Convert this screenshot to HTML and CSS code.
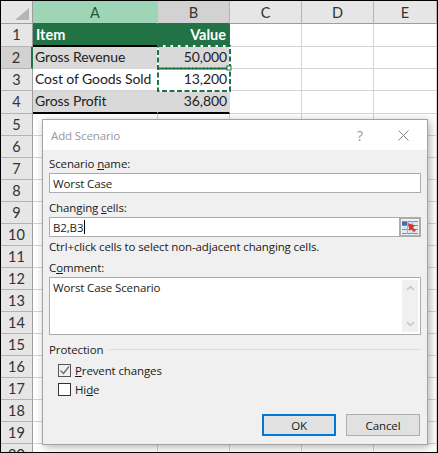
FILE: index.html
```html
<!DOCTYPE html>
<html lang="en">
<head>
<meta charset="utf-8">
<title>Add Scenario</title>
<link rel="stylesheet" href="styles.css">
</head>
<body>
<div class="frame">
  <div class="sheet">
    <div class="row row-head">
      <div class="rh corner"><svg width="14" height="12" viewBox="0 0 14 12"><path d="M14 0V12H0Z" fill="#b5b5b5"/></svg></div>
      <div class="ch col-a sel-a">A</div><div class="ch col-v sel-b">B</div><div class="ch col-n">C</div><div class="ch col-n">D</div><div class="ch col-l">E</div>
    </div>
    <div class="row r-tall">
      <div class="rh">1</div>
      <div class="c col-a th">Item</div><div class="c col-v th num">Value</div><div class="c col-n"></div><div class="c col-n"></div><div class="c col-l"></div>
    </div>
    <div class="row">
      <div class="rh rh-sel">2</div>
      <div class="c col-a band">Gross Revenue</div>
      <div class="c col-v band num anchor">50,000
        <svg class="ants" width="76" height="50" viewBox="0 0 76 50">
          <rect x="1" y="1" width="72" height="22.5" class="ant-bg"/>
          <rect x="1" y="23.5" width="72" height="22.5" class="ant-bg"/>
          <rect x="1" y="1" width="72" height="22.5" class="ant-fg"/>
          <rect x="1" y="23.5" width="72" height="22.5" class="ant-fg"/>
          <rect x="70" y="21" width="4" height="4" class="ant-handle"/>
        </svg>
      </div>
      <div class="c col-n"></div><div class="c col-n"></div><div class="c col-l"></div>
    </div>
    <div class="row">
      <div class="rh">3</div>
      <div class="c col-a">Cost of Goods Sold</div><div class="c col-v num">13,200</div><div class="c col-n"></div><div class="c col-n"></div><div class="c col-l"></div>
    </div>
    <div class="row r-tall">
      <div class="rh">4</div>
      <div class="c col-a band last">Gross Profit</div><div class="c col-v band num last">36,800</div><div class="c col-n"></div><div class="c col-n"></div><div class="c col-l"></div>
    </div>
    <div class="row"><div class="rh">5</div><div class="c col-a"></div><div class="c col-v"></div><div class="c col-n"></div><div class="c col-n"></div><div class="c col-l"></div></div>
    <div class="row"><div class="rh">6</div><div class="c col-a"></div><div class="c col-v"></div><div class="c col-n"></div><div class="c col-n"></div><div class="c col-l"></div></div>
    <div class="row"><div class="rh">7</div><div class="c col-a"></div><div class="c col-v"></div><div class="c col-n"></div><div class="c col-n"></div><div class="c col-l"></div></div>
    <div class="row"><div class="rh">8</div><div class="c col-a"></div><div class="c col-v"></div><div class="c col-n"></div><div class="c col-n"></div><div class="c col-l"></div></div>
    <div class="row"><div class="rh">9</div><div class="c col-a"></div><div class="c col-v"></div><div class="c col-n"></div><div class="c col-n"></div><div class="c col-l"></div></div>
    <div class="row"><div class="rh">10</div><div class="c col-a"></div><div class="c col-v"></div><div class="c col-n"></div><div class="c col-n"></div><div class="c col-l"></div></div>
    <div class="row"><div class="rh">11</div><div class="c col-a"></div><div class="c col-v"></div><div class="c col-n"></div><div class="c col-n"></div><div class="c col-l"></div></div>
    <div class="row"><div class="rh">12</div><div class="c col-a"></div><div class="c col-v"></div><div class="c col-n"></div><div class="c col-n"></div><div class="c col-l"></div></div>
    <div class="row"><div class="rh">13</div><div class="c col-a"></div><div class="c col-v"></div><div class="c col-n"></div><div class="c col-n"></div><div class="c col-l"></div></div>
    <div class="row"><div class="rh">14</div><div class="c col-a"></div><div class="c col-v"></div><div class="c col-n"></div><div class="c col-n"></div><div class="c col-l"></div></div>
    <div class="row"><div class="rh">15</div><div class="c col-a"></div><div class="c col-v"></div><div class="c col-n"></div><div class="c col-n"></div><div class="c col-l"></div></div>
    <div class="row"><div class="rh">16</div><div class="c col-a"></div><div class="c col-v"></div><div class="c col-n"></div><div class="c col-n"></div><div class="c col-l"></div></div>
    <div class="row"><div class="rh">17</div><div class="c col-a"></div><div class="c col-v"></div><div class="c col-n"></div><div class="c col-n"></div><div class="c col-l"></div></div>
    <div class="row"><div class="rh">18</div><div class="c col-a"></div><div class="c col-v"></div><div class="c col-n"></div><div class="c col-n"></div><div class="c col-l"></div></div>
    <div class="row"><div class="rh">19</div><div class="c col-a"></div><div class="c col-v"></div><div class="c col-n"></div><div class="c col-n"></div><div class="c col-l"></div></div>
    <div class="row"><div class="rh">20</div><div class="c col-a"></div><div class="c col-v"></div><div class="c col-n"></div><div class="c col-n"></div><div class="c col-l"></div></div>
  </div>

  <div class="dialog">
    <div class="titlebar">
      <span class="title">Add Scenario</span>
      <span class="help">?</span>
      <svg class="close" width="11" height="11" viewBox="0 0 11 11"><path d="M0.5 0.5L10.5 10.5M10.5 0.5L0.5 10.5" stroke="#808080" fill="none"/></svg>
    </div>
    <div class="body">
      <div class="label l-name">Scenario <u>n</u>ame:</div>
      <div class="input">Worst Case</div>
      <div class="label l-cells">Changing <u>c</u>ells:</div>
      <div class="input input-ref">
        <span class="ref-text">B2,B3<i class="caret"></i></span>
        <span class="ref-btn">
          <svg width="16" height="13" viewBox="0 0 16 13">
            <rect x="0" y="0" width="16" height="13" fill="#dfe8f4"/>
            <path d="M0 0.5H16M0 4.5H16M0 8.5H16M0 12.5H16" stroke="#6f93c4"/>
            <path d="M5.5 0V13M10.5 0V13" stroke="#9db6d8"/>
            <path d="M0 1H5V4H0Z" fill="#3f6fae"/>
            <path d="M6 2L13 4.5L11 6.5L14 9.5L12 11L9.5 8L7.5 10Z" fill="#d9381e"/>
          </svg>
        </span>
      </div>
      <div class="hint">Ctrl+click cells to select non-adjacent changing cells.</div>
      <div class="label l-comment">C<u>o</u>mment:</div>
      <div class="textarea">
        <span class="ta-text">Worst Case Scenario</span>
        <div class="scroll">
          <svg width="9" height="6" viewBox="0 0 9 6"><path d="M1 5L4.5 1.5L8 5" stroke="#c4c4c4" stroke-width="1.5" fill="none"/></svg>
          <svg width="9" height="6" viewBox="0 0 9 6"><path d="M1 1L4.5 4.5L8 1" stroke="#c4c4c4" stroke-width="1.5" fill="none"/></svg>
        </div>
      </div>
      <div class="group-head"><span>Protection</span><i class="rule"></i></div>
      <div class="check c-one">
        <span class="box"><svg width="11" height="11" viewBox="0 0 11 11"><path d="M1.5 5.5L4.5 8.5L10 1.5" stroke="#666" stroke-width="1.3" fill="none"/></svg></span>
        <span><u>P</u>revent changes</span>
      </div>
      <div class="check c-two">
        <span class="box"></span>
        <span>Hi<u>d</u>e</span>
      </div>
      <div class="buttons">
        <div class="btn btn-ok">OK</div>
        <div class="btn">Cancel</div>
      </div>
    </div>
  </div>
</div>
</body>
</html>
```
FILE: styles.css
```css
* { box-sizing: border-box; }
html, body { margin: 0; padding: 0; background: #fff; }
.frame {
  position: relative;
  width: 438px;
  height: 453px;
  border: 1px solid #000;
  overflow: hidden;
  background: #fff;
}
.sheet { display: flex; flex-direction: column; font-family: Lato, "Liberation Sans", sans-serif; font-size: 14px; color: #222; }
.row { display: flex; height: 22px; flex: none; }
.r-tall { height: 23px; }
.row-head { height: 23px; }
.rh {
  width: 32px; flex: none;
  background: #e6e6e6;
  border-right: 1px solid #9e9e9e;
  border-bottom: 1px solid #b4b4b4;
  display: flex; align-items: center; justify-content: center;
  padding-bottom: 1px;
  font-size: 14.5px; color: #333;
}
.corner { align-items: flex-end; justify-content: flex-end; padding: 0 3px 3px 0; border-bottom-color: #9e9e9e; }
.rh-sel { background: #d2d2d2; border-right: 2px solid #217346; }
.ch {
  background: #e6e6e6;
  border-right: 1px solid #b4b4b4;
  border-bottom: 1px solid #9e9e9e;
  display: flex; align-items: center; justify-content: center;
  font-size: 14.5px; color: #333;
  flex: none;
}
.sel-a { background: #9fd5b7; border-right-color: #9fd5b7; border-bottom: 1px solid #217346; color: #1f5c3a; }
.sel-b { background: #d2d2d2; border-bottom: 1px solid #217346; }
.col-a { width: 125px; }
.col-v { width: 72px; }
.col-n { width: 72px; }
.col-l { flex: 1; }
.c {
  flex: none;
  border-right: 1px solid #d4d4d4;
  border-bottom: 1px solid #d4d4d4;
  display: flex; align-items: center;
  padding: 0 2px 2px 2px;
  letter-spacing: -0.1px;
  white-space: nowrap;
}
.c.col-l { flex: 1; }
.num { justify-content: flex-end; }
.th { background: #217346; color: #fff; font-weight: 700; border-color: #217346; border-bottom: 2px solid #000; font-size: 14.5px; letter-spacing: 0; padding: 0 3px; }
.band { background: #d9d9d9; border-color: #d9d9d9; }
.last { border-bottom: 2px solid #000; }
.anchor { position: relative; }
.ants { position: absolute; left: -1px; top: -2px; overflow: visible; }
.ant-bg { fill: none; stroke: #fff; stroke-width: 2; }
.ant-fg { fill: none; stroke: #217346; stroke-width: 2; stroke-dasharray: 5 2.5; }
.ant-handle { fill: #fff; stroke: #217346; stroke-width: 1; }

.dialog {
  position: absolute;
  left: 41px; top: 118px;
  width: 386px; height: 326px;
  border: 1px solid #a3a3a3;
  background: #f0f0f0;
  box-shadow: 2px 2px 8px rgba(0,0,0,.3);
  font-family: "Open Sans", "Noto Sans", sans-serif;
  font-size: 11.5px;
  letter-spacing: -0.12px;
  color: #1a1a1a;
  display: flex; flex-direction: column;
}
.titlebar {
  height: 30px; flex: none;
  background: #fff;
  display: flex; align-items: center;
  padding: 0 18px 0 8px;
}
.title { color: #999; font-size: 11.5px; flex: 1; }
.help { color: #999; font-size: 14px; margin-right: 35px; }
.body { flex: 1; padding: 0 6px; display: flex; flex-direction: column; }
.label { line-height: 14px; }
.l-name { margin-top: 7px; }
.l-cells { margin-top: 8px; }
.l-comment { margin-top: 6px; }
.input {
  margin-top: 2px;
  height: 20px; flex: none;
  border: 1px solid #acacac;
  background: #fff;
  display: flex; align-items: center;
  padding: 0 3px;
}
.input-ref { padding-right: 0; justify-content: space-between; }
.ref-text { display: flex; align-items: center; }
.caret { display: block; width: 1px; height: 14px; background: #000; margin-left: 1px; }
.ref-btn {
  width: 22px; height: 20px; margin: -1px -1px -1px 0;
  border: 2px solid #acacac;
  background: #f0f0f0;
  display: flex; align-items: center; justify-content: center;
}
.hint { margin-top: 2px; line-height: 16px; }
.textarea {
  margin-top: 2px;
  height: 58px; flex: none;
  border: 1px solid #acacac;
  background: #fff;
  padding: 2px 2px 2px 3px;
  display: flex; justify-content: space-between;
}
.scroll {
  width: 16px;
  background: #f0f0f0;
  display: flex; flex-direction: column; justify-content: space-between; align-items: center;
  padding: 5px 0;
}
.group-head { display: flex; align-items: center; gap: 6px; margin-top: 6px; height: 16px; }
.rule { flex: 1; height: 1px; background: #dcdcdc; }
.check { display: flex; align-items: center; gap: 4px; padding-left: 9px; height: 14px; }
.c-one { margin-top: 6px; }
.c-two { margin-top: 5px; }
.box {
  width: 13px; height: 13px; flex: none;
  border: 1px solid #333;
  background: #fff;
  display: flex; align-items: center; justify-content: center;
}
.c-one .box { border-color: #555; background: #f0f0f0; }
.buttons { display: flex; justify-content: flex-end; gap: 10px; margin-top: 18px; padding-right: 1px; }
.btn {
  width: 74px; height: 22px;
  border: 1px solid #adadad;
  background: #e1e1e1;
  display: flex; align-items: center; justify-content: center;
}
.btn-ok { border: 2px solid #0078d7; }
```
